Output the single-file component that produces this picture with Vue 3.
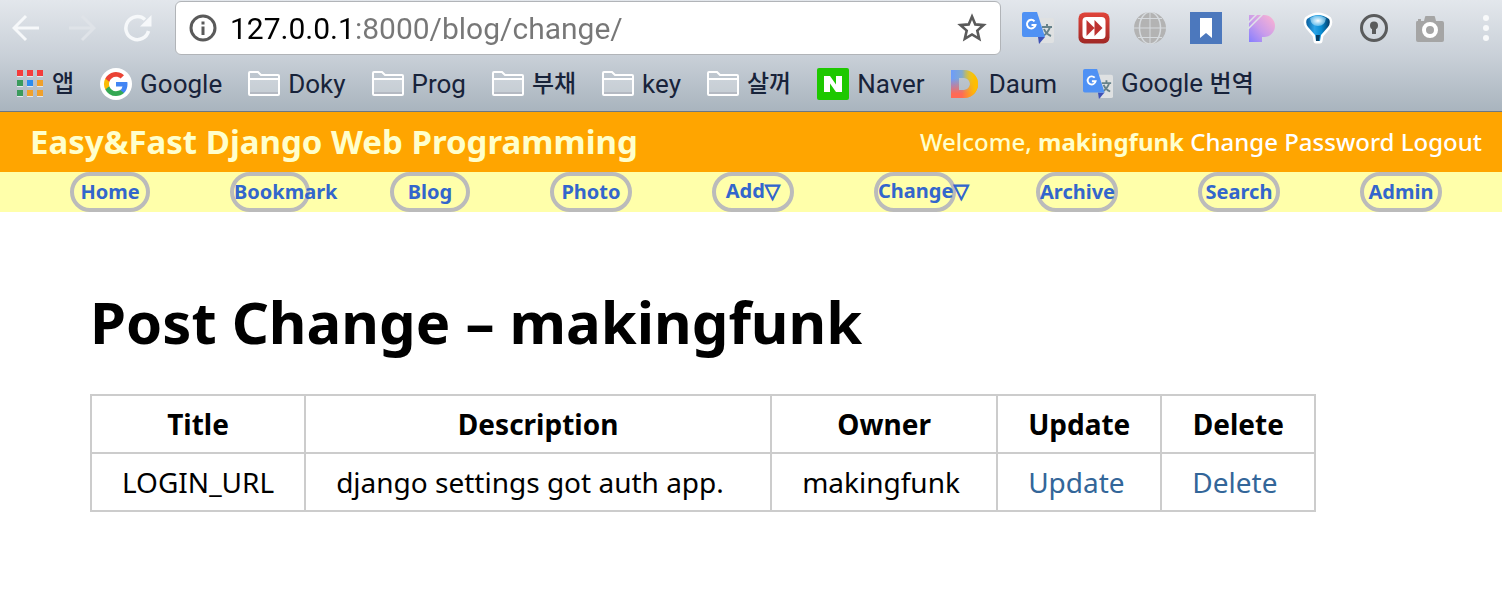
<script setup>
import { ref } from 'vue'

const address = ref('127.0.0.1:8000/blog/change/')

const bookmarks = [
  { icon: 'apps', korean: '앱' },
  { icon: 'google', label: 'Google' },
  { icon: 'folder', label: 'Doky' },
  { icon: 'folder', label: 'Prog' },
  { icon: 'folder', korean: '부채' },
  { icon: 'folder', label: 'key' },
  { icon: 'folder', korean: '살꺼' },
  { icon: 'naver', label: 'Naver' },
  { icon: 'daum', label: 'Daum' },
  { icon: 'translate', label: 'Google ', korean: '번역' },
]

const appColors = ['#f43b3b', '#f43b3b', '#f43b3b', '#3a9b5c', '#2b8cf0', '#f0a02b', '#3a9b5c', '#f0a02b', '#f0a02b']

const menu = [
  { label: 'Home' },
  { label: 'Bookmark' },
  { label: 'Blog' },
  { label: 'Photo' },
  { label: 'Add', drop: true },
  { label: 'Change', drop: true },
  { label: 'Archive' },
  { label: 'Search' },
  { label: 'Admin' },
]

const posts = [
  { title: 'LOGIN_URL', description: 'django settings got auth app.', owner: 'makingfunk' },
]
</script>

<template>
  <div class="browser">
    <div class="toolbar">
      <div class="controls">
        <button type="button" aria-label="Back">
          <svg width="28" height="28" viewBox="0 0 28 28" fill="none" stroke="#f6f8fa" stroke-width="3"><path d="M27 14H3M14 2 2 14l12 12" /></svg>
        </button>
        <button type="button" aria-label="Forward" disabled>
          <svg width="28" height="28" viewBox="0 0 28 28" fill="none" stroke="#dfe3e8" stroke-width="3"><path d="M1 14h24M14 2l12 12-12 12" /></svg>
        </button>
        <button type="button" aria-label="Reload">
          <svg width="28" height="28" viewBox="0 0 28 28"><path d="M24.500 17A11.500 11.500 0 1 1 21 5.500" fill="none" stroke="#f6f8fa" stroke-width="3.500" /><path d="M27.500 1v11.500H16z" fill="#f6f8fa" /></svg>
        </button>
      </div>
      <div class="omnibox">
        <button type="button" aria-label="Site information">
          <svg width="28" height="28" viewBox="0 0 28 28"><circle cx="14" cy="14" r="12" fill="none" stroke="#5a5a5a" stroke-width="3" /><path d="M12.500 7.500h3v3h-3zM12.500 12.500h3V21h-3z" fill="#5a5a5a" /></svg>
        </button>
        <input v-model="address" type="text" aria-label="Address" spellcheck="false" />
        <button type="button" aria-label="Bookmark this page">
          <svg width="30" height="30" viewBox="0 0 30 30"><path d="m15 3.500 3.300 7.900 8.300.7-6.300 5.500 1.900 8.200L15 21.400l-7.200 4.400 1.900-8.200-6.300-5.500 8.300-.7z" fill="none" stroke="#5a5a5a" stroke-width="2.600" /></svg>
        </button>
      </div>
      <div class="extensions">
        <button type="button" aria-label="Translate">
          <svg width="32" height="32" viewBox="0 0 32 32"><use href="#translate-logo" /></svg>
        </button>
        <button type="button" aria-label="Fast forward">
          <svg width="32" height="32" viewBox="0 0 32 32">
            <defs><linearGradient id="ff" x2="0" y2="1"><stop stop-color="#e0443a" /><stop offset="1" stop-color="#a02826" /></linearGradient></defs>
            <rect x=".5" y=".5" width="31" height="31" rx="6" fill="url(#ff)" />
            <rect x="4.500" y="5" width="23" height="22" rx="4" fill="#fff" />
            <path d="M8.500 8 16.500 16l-8 8zM16.500 8l8 8-8 8z" fill="#bd3230" />
          </svg>
        </button>
        <button type="button" aria-label="Globe">
          <svg width="32" height="32" viewBox="0 0 32 32"><circle cx="16" cy="16" r="16" fill="#b3b3b3" /><path d="M16 0v32M0 16h32M4 6.500h24M4 25.500h24" stroke="#d6dade" fill="none" /><ellipse cx="16" cy="16" rx="10.500" ry="16" stroke="#d6dade" stroke-width="1.500" fill="none" /></svg>
        </button>
        <button type="button" aria-label="Save bookmark">
          <svg width="32" height="32" viewBox="0 0 32 32"><path d="M0 0h32v32H0z" fill="#4c78bd" /><path d="M10 6h12v20l-6-5-6 5z" fill="#fff" /></svg>
        </button>
        <button type="button" aria-label="Pushbullet">
          <svg width="32" height="32" viewBox="0 0 32 32">
            <defs><linearGradient id="pp" x1="0" y1="1" x2="1" y2="0"><stop stop-color="#857eff" /><stop offset=".45" stop-color="#c99ceb" /><stop offset="1" stop-color="#ffb5d0" /></linearGradient></defs>
            <path d="M3 3h15a11 11 0 0 1 0 22h-2v5H3z" fill="url(#pp)" />
            <path d="M2 11 11 2M2 17 17 2" stroke="#dfe3e8" stroke-width="1.500" />
          </svg>
        </button>
        <button type="button" aria-label="Balloon">
          <svg width="32" height="32" viewBox="0 0 32 32">
            <defs>
              <linearGradient id="bl" x2="1"><stop stop-color="#0a5f9e" /><stop offset=".35" stop-color="#2ba4e8" /><stop offset=".65" stop-color="#078ad0" /><stop offset="1" stop-color="#033b66" /></linearGradient>
              <radialGradient id="bh"><stop stop-color="#fff" /><stop offset="1" stop-color="#9ad6f5" stop-opacity=".6" /></radialGradient>
            </defs>
            <path d="M5 7Q16-1 27 7q2 4-1 8l-7 8-1 6h-4l-1-6-7-8Q3 11 5 7z" fill="url(#bl)" stroke="#fff" stroke-width="5" stroke-linejoin="round" paint-order="stroke" />
            <path d="M8 6q8-5 16 0-1 8-8 8T8 6z" fill="url(#bh)" />
            <path d="M14 23h4l-1 6h-3z" fill="#063e66" />
          </svg>
        </button>
        <button type="button" aria-label="Password manager">
          <svg width="32" height="32" viewBox="0 0 32 32"><circle cx="16" cy="16" r="12.500" fill="none" stroke="#5a5b5c" stroke-width="3" /><circle cx="16" cy="13.500" r="4" fill="#5a5b5c" /><path d="M14 15h4v7h-4z" fill="#5a5b5c" /></svg>
        </button>
        <button type="button" aria-label="Capture">
          <svg width="32" height="32" viewBox="0 0 32 32"><path d="M3 9h1V7h3v2h3l1-4q0-1 1-1h8q1 0 1 1l1 4h6q2 0 2 2v17q0 2-2 2H4q-2 0-2-2V11q0-2 1-2z" fill="#a5a5a5" /><circle cx="16" cy="18" r="6" fill="none" stroke="#fff" stroke-width="4" /></svg>
        </button>
      </div>
      <button type="button" class="more" aria-label="Menu">
        <svg width="8" height="28" viewBox="0 0 8 28" fill="#f8f9fa"><circle cx="4" cy="4" r="3" /><circle cx="4" cy="14" r="3" /><circle cx="4" cy="24" r="3" /></svg>
      </button>
    </div>

    <nav class="bookmarks" aria-label="Bookmarks">
      <a v-for="(b, n) in bookmarks" :key="n" href="#">
        <svg v-if="b.icon === 'apps'" width="28" height="28" viewBox="0 0 28 28">
          <g v-for="(c, i) in appColors" :key="i">
            <rect :x="1 + (i % 3) * 10" :y="Math.floor(i / 3) * 10" width="6" height="7" fill="#e4e9ee" />
            <rect :x="1 + (i % 3) * 10" :y="Math.floor(i / 3) * 10" width="6" height="6" :fill="c" />
          </g>
        </svg>
        <svg v-else-if="b.icon === 'google'" width="32" height="32" viewBox="0 0 32 32">
          <circle cx="16" cy="16" r="16" fill="#fff" />
          <g transform="translate(4 4)">
            <path d="M23.500 12.300c0-.8-.1-1.600-.2-2.300H12v4.500h6.500a5.500 5.500 0 0 1-2.400 3.600v3h3.900c2.200-2.100 3.500-5.200 3.500-8.800z" fill="#4285f4" />
            <path d="M12 24c3.200 0 6-1.100 8-2.900l-3.900-3c-1.100.7-2.500 1.200-4.100 1.200-3.100 0-5.800-2.100-6.700-5h-4v3.100A12 12 0 0 0 12 24z" fill="#34a853" />
            <path d="M5.300 14.300a7.200 7.200 0 0 1 0-4.600V6.600h-4a12 12 0 0 0 0 10.800z" fill="#fbbc05" />
            <path d="M12 4.800c1.800 0 3.400.6 4.600 1.800L20 3.200A12 12 0 0 0 1.300 6.600l4 3.100C6.200 6.900 8.900 4.800 12 4.800z" fill="#ea4335" />
          </g>
        </svg>
        <svg v-else-if="b.icon === 'folder'" width="32" height="28" viewBox="0 0 32 28">
          <path d="M1 9h30v15q0 1-1 1H2q-1 0-1-1z" fill="#fff" fill-opacity=".25" />
          <path d="M2 22h28v2H2z" fill="#b4b9c2" />
          <path d="M1 24V3q0-1 1-1h8l3 3h17q1 0 1 1v18q0 1-1 1H2q-1 0-1-1zM1 9h30" fill="none" stroke="#fff" stroke-width="2" />
        </svg>
        <svg v-else-if="b.icon === 'naver'" width="32" height="32" viewBox="0 0 32 32">
          <rect width="32" height="32" rx="2" fill="#1ec800" /><path d="M7 8h6l6 8.500V8h6v16h-6l-6-8.500V24H7z" fill="#fff" />
        </svg>
        <svg v-else-if="b.icon === 'daum'" width="30" height="30" viewBox="0 0 30 30">
          <defs>
            <linearGradient id="da" x2="1"><stop stop-color="#6c9cfb" /><stop offset=".45" stop-color="#84acc9" /><stop offset=".8" stop-color="#d5d33c" /><stop offset="1" stop-color="#f5d000" /></linearGradient>
            <linearGradient id="db" x2="0" y2="1"><stop offset=".3" stop-color="#ff6363" stop-opacity="0" /><stop offset=".85" stop-color="#ff6a55" /></linearGradient>
            <linearGradient id="dc" x2="1"><stop offset=".4" stop-color="#ffbd00" stop-opacity="0" /><stop offset=".9" stop-color="#ffbd00" /></linearGradient>
          </defs>
          <path v-for="fill in ['url(#da)', 'url(#db)', 'url(#dc)']" :key="fill" d="M0 1h13a14 14 0 0 1 0 28H0zM8 9v12h5a6 6 0 0 0 0-12z" fill-rule="evenodd" :fill="fill" />
        </svg>
        <svg v-else width="30" height="30" viewBox="0 0 32 32">
          <g id="translate-logo">
            <path d="M14 6h16q2 0 2 2v21q0 2-2 2H19z" fill="#dfe1e2" />
            <path d="M20 15h10M25 12v3M28 15q-2 6-7 9M22 17q2 5 7 7" fill="none" stroke="#66828a" stroke-width="2" />
            <path d="M16 25h7l-6 7z" fill="#3f51b5" />
            <path d="M2 0h13l8 25H2q-2 0-2-2V2q0-2 2-2z" fill="#4f91f4" />
            <path d="M12.500 9.300A4.300 4.300 0 1 0 13.500 13H9.500" fill="none" stroke="#fff" stroke-width="2" />
          </g>
        </svg>
        <span>{{ b.label }}<span v-if="b.korean" class="korean" lang="ko">{{ b.korean }}</span></span>
      </a>
    </nav>
  </div>

  <header class="banner">
    <div class="site">Easy&amp;Fast Django Web Programming</div>
    <div class="user">Welcome, <strong>makingfunk</strong> <a href="#">Change Password</a> <a href="#">Logout</a></div>
  </header>

  <nav class="menu" aria-label="Main">
    <a v-for="m in menu" :key="m.label" href="#" :class="{ drop: m.drop }">
      <span>{{ m.label }}<i v-if="m.drop">▽</i></span>
    </a>
  </nav>

  <main class="content">
    <h1>Post Change – makingfunk</h1>
    <table>
      <colgroup><col class="c-title" /><col class="c-desc" /><col class="c-owner" /><col class="c-update" /><col class="c-delete" /></colgroup>
      <thead>
        <tr><th>Title</th><th>Description</th><th>Owner</th><th>Update</th><th>Delete</th></tr>
      </thead>
      <tbody>
        <tr v-for="p in posts" :key="p.title">
          <td>{{ p.title }}</td><td>{{ p.description }}</td><td>{{ p.owner }}</td>
          <td><a href="#">Update</a></td><td><a href="#">Delete</a></td>
        </tr>
      </tbody>
    </table>
  </main>
</template>

<style>
body {
  margin: 0;
  background: #fff;
  font-family: "Noto Sans", "Open Sans", sans-serif;
}
</style>

<style scoped>
a {
  text-decoration: none;
}

svg {
  display: block;
  flex: none;
}

button {
  padding: 0;
  border: 0;
  background: none;
}

.browser {
  background: linear-gradient(#e3e7ec, #c9d0d8 50%, #a9b4be);
  border-bottom: 1px solid #6b7782;
  font-family: Roboto, "Noto Sans CJK KR", sans-serif;
}

.toolbar {
  display: flex;
  align-items: center;
  height: 56px;
}

.controls {
  display: flex;
  gap: 28px;
  padding: 0 23px 0 12px;
}

.omnibox {
  display: flex;
  flex: 1;
  align-items: center;
  box-sizing: border-box;
  height: 54px;
  padding: 0 13px;
  border: 1px solid #b1b4b8;
  border-radius: 6px;
  background: #fff;
}

.omnibox input {
  flex: 1;
  min-width: 0;
  padding: 2px 0 0;
  margin-left: 13px;
  border: 0;
  outline: 0;
  font: 30px/38px Roboto, sans-serif;
  color: transparent;
  background: linear-gradient(90deg, #000 126px, #777 126px);
  background-clip: text;
}

.extensions {
  display: flex;
  gap: 24px;
  padding: 0 36px 0 21px;
}

.more {
  margin-right: 12px;
}

.bookmarks {
  display: flex;
  align-items: center;
  gap: 26px;
  height: 55px;
  padding: 0 16px;
}

.bookmarks a {
  display: flex;
  align-items: center;
  gap: 8px;
  font-size: 26px;
  line-height: 32px;
  color: #18233a;
  white-space: pre;
}

.korean {
  font-size: 24px;
  font-weight: 500;
}

.banner {
  display: flex;
  align-items: center;
  justify-content: space-between;
  box-sizing: border-box;
  height: 60px;
  padding: 0 20px 2px 30px;
  background: #ffa500;
  color: #ffc;
}

.site {
  font-size: 33px;
  font-weight: 700;
}

.user {
  font-size: 24px;
  font-weight: 500;
}

.user a {
  color: #fff;
}

.menu {
  display: flex;
  justify-content: space-between;
  padding: 0 60px 0 70px;
  background: #ffa;
}

.menu a {
  display: flex;
  align-items: center;
  justify-content: center;
  box-sizing: border-box;
  width: 80px;
  height: 40px;
  border: 4px solid #bbb;
  border-radius: 20px;
  font-size: 20px;
  font-weight: 700;
  line-height: 30px;
  color: #36c;
  white-space: nowrap;
}

.menu a:nth-child(n + 4) {
  width: 82px;
}

.menu span {
  min-width: 0;
  max-width: 100%;
}

.menu .drop {
  align-items: flex-start;
}

.menu i {
  font-style: normal;
  font-family: "DejaVu Sans", sans-serif;
  -webkit-text-stroke: 1px #36c;
}

.content {
  padding: 72px 90px;
}

h1 {
  margin: 0;
  font-size: 58px;
  line-height: 76px;
}

table {
  margin-top: 34px;
  border-collapse: collapse;
  font-size: 28px;
  line-height: 36px;
  white-space: nowrap;
}

th,
td {
  padding: 10px 30px;
  border: 2px solid #ccc;
}

td a {
  color: #369;
}

.c-title { width: 214px; }
.c-desc { width: 466px; }
.c-owner { width: 226px; }
.c-update { width: 164px; }
.c-delete { width: 154px; }
</style>
